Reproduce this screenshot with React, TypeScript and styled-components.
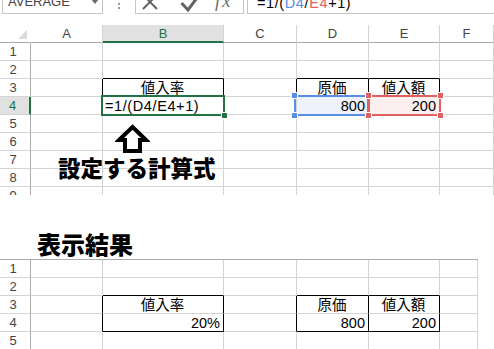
import React, { ReactNode } from "react";
import styled, { createGlobalStyle } from "styled-components";

const GRID_LINE = "#d4d4d4";
const HEADER_LINE = "#ababab";
const BOX_LINE = "#c6c6c6";
const EXCEL_GREEN = "#217346";
const REF_BLUE = "#5a8de3";
const REF_RED = "#e2605f";
const CELL_FONT = `"Liberation Sans", "Noto Sans CJK JP", sans-serif`;

const GlobalStyle = createGlobalStyle`
  html, body {
    margin: 0;
    padding: 0;
    background: #fff;
  }
  body {
    font-family: ${CELL_FONT};
  }
`;

const Page = styled.div`
  width: 494px;
  height: 349px;
  overflow: hidden;
  background: #fff;
`;

const TopSheet = styled.div`
  position: relative;
  height: 195px;
  overflow: hidden;
`;

/* formula bar */

const Toolbar = styled.div`
  display: flex;
  align-items: flex-start;
  height: 25px;
  overflow: hidden;
`;

const NameBox = styled.div`
  box-sizing: border-box;
  display: flex;
  align-items: flex-start;
  width: 101px;
  height: 24px;
  margin: -10px 0 0 2px;
  padding-left: 5px;
  border: 1px solid ${BOX_LINE};
  font: 13px/22px "Liberation Sans", sans-serif;
  color: #444;
`;

const Caret = styled.span`
  margin: 8px 3px 0 auto;
  border-left: 4px solid transparent;
  border-right: 4px solid transparent;
  border-top: 5px solid #6a6a6a;
`;

const Splitter = styled.span`
  width: 2px;
  height: 2px;
  margin: 3px 0 0 15px;
  background: #9a9a9a;
  box-shadow: 0 4px 0 #9a9a9a;
`;

const ButtonBox = styled.div`
  box-sizing: border-box;
  display: flex;
  align-items: flex-start;
  width: 109px;
  height: 24px;
  margin: -10px 0 0 15px;
  border: 1px solid ${BOX_LINE};
`;

const BarIcon = styled.svg<{ $left: number; $top: number }>`
  flex: none;
  margin: ${(p) => p.$top}px 0 0 ${(p) => p.$left}px;
`;

const Fx = styled.span`
  margin: 0 0 0 14px;
  font: italic 19px/20px "Liberation Serif", serif;
  letter-spacing: 2px;
  color: #707070;
`;

const FormulaInput = styled.div`
  box-sizing: border-box;
  flex: 1;
  height: 24px;
  margin: -10px -4px 0 3px;
  padding: 1px 0 0 9px;
  border: 1px solid ${BOX_LINE};
  font: 14.5px/22px ${CELL_FONT};
  color: #000;
  white-space: nowrap;
`;

const FormulaText = styled.span`
  letter-spacing: 0.6px;
  white-space: nowrap;
`;

const Ref = styled.span<{ $color: string }>`
  color: ${(p) => p.$color};
`;

/* grid */

const SheetGrid = styled.div<{ $width?: number; $topLine?: boolean }>`
  display: grid;
  grid-template-columns: 31px 72px 121px 73px 72px 71px 1fr;
  grid-auto-rows: 18px;
  width: ${(p) => (p.$width ? `${p.$width}px` : "auto")};
  border-top: ${(p) => (p.$topLine ? `1px solid ${HEADER_LINE}` : "none")};
`;

const Corner = styled.div`
  box-sizing: border-box;
  display: flex;
  align-items: flex-end;
  justify-content: flex-end;
  padding: 0 3px 3px 0;
  border-right: 1px solid #fff;
  border-bottom: 1px solid ${HEADER_LINE};
`;

const CornerMark = styled.span`
  border-left: 9px solid transparent;
  border-bottom: 9px solid #dadada;
`;

const ColHeader = styled.div<{ $active?: boolean }>`
  box-sizing: border-box;
  display: flex;
  align-items: center;
  justify-content: center;
  border-right: 1px solid ${GRID_LINE};
  border-bottom: ${(p) => (p.$active ? `2px solid ${EXCEL_GREEN}` : `1px solid ${HEADER_LINE}`)};
  background: ${(p) => (p.$active ? "#e1e1e1" : "#fff")};
  color: ${(p) => (p.$active ? EXCEL_GREEN : "#444")};
  font: 13px "Liberation Sans", sans-serif;
`;

const RowHeader = styled.div<{ $active?: boolean }>`
  box-sizing: border-box;
  display: flex;
  align-items: center;
  justify-content: center;
  padding-right: 4px;
  border-right: ${(p) => (p.$active ? `2px solid ${EXCEL_GREEN}` : `1px solid ${HEADER_LINE}`)};
  border-bottom: 1px solid ${GRID_LINE};
  background: ${(p) => (p.$active ? "#e1e1e1" : "#fff")};
  color: ${(p) => (p.$active ? EXCEL_GREEN : "#444")};
  font: 13px "Liberation Sans", sans-serif;
`;

const Cell = styled.div<{ $align: string; $fill?: string; $right: string; $bottom: string }>`
  position: relative;
  box-sizing: border-box;
  display: flex;
  align-items: flex-end;
  justify-content: ${(p) => p.$align};
  padding: 0 3px 0 2px;
  border-right: 1px solid ${(p) => p.$right};
  border-bottom: 1px solid ${(p) => p.$bottom};
  background: ${(p) => p.$fill ?? "transparent"};
  font: 14.5px/16px ${CELL_FONT};
  color: #000;
  white-space: nowrap;
`;

const Frame = styled.div<{ $color: string; $inset: string }>`
  position: absolute;
  inset: ${(p) => p.$inset};
  border: 2px solid ${(p) => p.$color};
  z-index: 2;
  pointer-events: none;
`;

const Handle = styled.span<{ $color: string; $x: "left" | "right"; $y: "top" | "bottom"; $off: number }>`
  position: absolute;
  width: 5px;
  height: 5px;
  background: ${(p) => p.$color};
  box-shadow: 0 0 0 1px #fff;
  ${(p) => p.$x}: ${(p) => p.$off}px;
  ${(p) => p.$y}: ${(p) => p.$off}px;
`;

/* annotations */

const UpArrow = styled.svg`
  position: absolute;
  left: 115px;
  top: 123px;
`;

const Caption = styled.div`
  position: absolute;
  left: 58px;
  top: 156px;
  font: 900 22.5px/1 "Noto Sans CJK JP", sans-serif;
  color: #000;
  white-space: nowrap;
`;

const Heading = styled.div`
  box-sizing: border-box;
  height: 64px;
  padding: 37px 0 0 37px;
  font: 900 24px/1 "Noto Sans CJK JP", sans-serif;
  color: #000;
`;

/* data */

type Mark = { color: string; inset: string; kind: "ref" | "select" };

interface CellSpec {
  text?: ReactNode;
  align?: string;
  fill?: string;
  mark?: Mark;
}

interface SheetSpec {
  rows: number;
  cells: Record<string, CellSpec>;
  edges: Set<string>;
  activeRow?: number;
  activeCol?: number;
}

const COLS = ["A", "B", "C", "D", "E", "F"];

const outline = (edges: Set<string>, r1: number, c1: number, r2: number, c2: number, innerV = false) => {
  for (let c = c1; c <= c2; c++) {
    edges.add(`${r1 - 1}:${c}:b`);
    edges.add(`${r2}:${c}:b`);
  }
  for (let r = r1; r <= r2; r++) {
    edges.add(`${r}:${c1 - 1}:r`);
    edges.add(`${r}:${c2}:r`);
    if (innerV) for (let c = c1; c < c2; c++) edges.add(`${r}:${c}:r`);
  }
  return edges;
};

const formula = "=1/(D4/E4+1)";

const topEdges = new Set<string>();
outline(topEdges, 3, 2, 3, 2);
outline(topEdges, 3, 4, 3, 5, true);

const topSheet: SheetSpec = {
  rows: 9,
  activeRow: 4,
  activeCol: 2,
  edges: topEdges,
  cells: {
    "3:2": { text: "値入率", align: "center" },
    "3:4": { text: "原価", align: "center" },
    "3:5": { text: "値入額", align: "center" },
    "4:2": {
      text: <FormulaText>{formula}</FormulaText>,
      align: "flex-start",
      mark: { color: EXCEL_GREEN, inset: "-2px -2px -2px -2px", kind: "select" },
    },
    "4:4": {
      text: "800",
      align: "flex-end",
      fill: "#edf2fc",
      mark: { color: REF_BLUE, inset: "-2px -1px -2px -3px", kind: "ref" },
    },
    "4:5": {
      text: "200",
      align: "flex-end",
      fill: "#fcefef",
      mark: { color: REF_RED, inset: "-2px -2px -2px -1px", kind: "ref" },
    },
  },
};

const bottomEdges = new Set<string>();
outline(bottomEdges, 3, 2, 4, 2);
outline(bottomEdges, 3, 4, 4, 5, true);

const bottomSheet: SheetSpec = {
  rows: 5,
  edges: bottomEdges,
  cells: {
    "3:2": { text: "値入率", align: "center" },
    "4:2": { text: "20%", align: "flex-end" },
    "3:4": { text: "原価", align: "center" },
    "3:5": { text: "値入額", align: "center" },
    "4:4": { text: "800", align: "flex-end" },
    "4:5": { text: "200", align: "flex-end" },
  },
};

const CellMark = ({ mark }: { mark: Mark }) => (
  <Frame $color={mark.color} $inset={mark.inset}>
    {mark.kind === "ref" ? (
      <>
        <Handle $color={mark.color} $x="left" $y="top" $off={-4} />
        <Handle $color={mark.color} $x="right" $y="top" $off={-4} />
        <Handle $color={mark.color} $x="left" $y="bottom" $off={-4} />
        <Handle $color={mark.color} $x="right" $y="bottom" $off={-4} />
      </>
    ) : (
      <Handle $color={mark.color} $x="right" $y="bottom" $off={-4} />
    )}
  </Frame>
);

const Sheet = ({ sheet, headers, width }: { sheet: SheetSpec; headers: boolean; width?: number }) => {
  const rows: ReactNode[] = [];
  for (let r = 1; r <= sheet.rows; r++) {
    rows.push(
      <RowHeader key={`h${r}`} $active={sheet.activeRow === r}>
        {r}
      </RowHeader>
    );
    for (let c = 1; c <= COLS.length; c++) {
      const spec = sheet.cells[`${r}:${c}`] ?? {};
      rows.push(
        <Cell
          key={`${r}:${c}`}
          $align={spec.align ?? "flex-start"}
          $fill={spec.fill}
          $right={sheet.edges.has(`${r}:${c}:r`) ? "#000" : GRID_LINE}
          $bottom={sheet.edges.has(`${r}:${c}:b`) ? "#000" : GRID_LINE}
        >
          {spec.text}
          {spec.mark && <CellMark mark={spec.mark} />}
        </Cell>
      );
    }
  }
  return (
    <SheetGrid $width={width} $topLine={!headers}>
      {headers && (
        <>
          <Corner>
            <CornerMark />
          </Corner>
          {COLS.map((name, i) => (
            <ColHeader key={name} $active={sheet.activeCol === i + 1}>
              {name}
            </ColHeader>
          ))}
        </>
      )}
      {rows}
    </SheetGrid>
  );
};

const FormulaBar = () => (
  <Toolbar>
    <NameBox>
      AVERAGE
      <Caret />
    </NameBox>
    <Splitter />
    <ButtonBox>
      <BarIcon $left={6} $top={3} width="16" height="16" viewBox="0 0 16 16">
        <path d="M1 1 L15 15 M15 1 L1 15" stroke="#5c5c5c" strokeWidth="1.8" fill="none" />
      </BarIcon>
      <BarIcon $left={22} $top={2} width="21" height="20" viewBox="0 0 21 20">
        <path d="M1.5 10 L8 17 L19.5 1.5" stroke="#626262" strokeWidth="3" fill="none" />
      </BarIcon>
      <Fx>fx</Fx>
    </ButtonBox>
    <FormulaInput>
      <FormulaText>
        =1/(<Ref $color={REF_BLUE}>D4</Ref>/<Ref $color={REF_RED}>E4</Ref>+1)
      </FormulaText>
    </FormulaInput>
  </Toolbar>
);

export default function App() {
  return (
    <Page>
      <GlobalStyle />
      <TopSheet>
        <FormulaBar />
        <Sheet sheet={topSheet} headers />
        <UpArrow width="35" height="31" viewBox="0 0 35 31">
          <polygon
            points="17.5,4 31,17 25,17 25,28 10,28 10,17 4,17"
            fill="#fff"
            stroke="#000"
            strokeWidth="4"
            strokeLinejoin="miter"
          />
        </UpArrow>
        <Caption>設定する計算式</Caption>
      </TopSheet>
      <Heading>表示結果</Heading>
      <Sheet sheet={bottomSheet} headers={false} width={478} />
    </Page>
  );
}
